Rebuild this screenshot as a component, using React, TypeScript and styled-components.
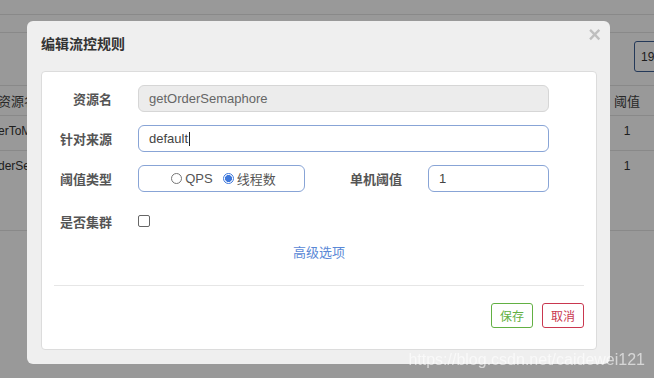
import React from "react";
import styled, { createGlobalStyle } from "styled-components";

const GlobalStyle = createGlobalStyle`
  html, body {
    margin: 0;
    padding: 0;
    width: 654px;
    height: 378px;
    overflow: hidden;
    background: #fff;
    font-family: "Liberation Sans", "Noto Sans CJK SC", sans-serif;
  }
`;

const Page = styled.div`
  width: 654px;
  height: 378px;
  background: #fff;
  color: #333;
  font-size: 12px;
`;

const Bar = styled.div<{ h: number }>`
  height: ${(p) => p.h}px;
  border-bottom: 1px solid #e4e4e4;
  box-sizing: border-box;
`;

const Toolbar = styled.div`
  height: 52px;
  display: flex;
  justify-content: flex-end;
  align-items: flex-start;
  padding-top: 8px;
  box-sizing: border-box;
`;

const SearchBox = styled.div`
  width: 60px;
  height: 31px;
  margin-right: -40px;
  border: 1px solid #3d5f95;
  border-radius: 3px;
  box-sizing: border-box;
  padding: 8px 6px;
  font-size: 12px;
`;

const TableRow = styled.div<{ h: number; head?: boolean }>`
  height: ${(p) => p.h}px;
  display: flex;
  justify-content: space-between;
  align-items: ${(p) => (p.head ? "center" : "flex-start")};
  padding: ${(p) => (p.head ? "0" : "8px")} 7px 0 0;
  border-top: 1px solid #e4e4e4;
  box-sizing: border-box;
  font-size: ${(p) => (p.head ? 13 : 12)}px;
  color: ${(p) => (p.head ? "#444" : "#333")};
`;

// left column sits mostly behind the dialog
const FirstCell = styled.div`
  white-space: nowrap;
  margin-left: -2px;
`;

const LastCell = styled.div`
  width: 40px;
  text-align: center;
`;

const Overlay = styled.div`
  position: fixed;
  inset: 0;
  background: rgba(0, 0, 0, 0.4);
`;

const Dialog = styled.div`
  position: absolute;
  left: 27px;
  top: 21px;
  width: 583px;
  height: 343px;
  box-sizing: border-box;
  background: #efefef;
  border-radius: 6px;
  padding: 14px 13px 14px 14px;
`;

const Title = styled.div`
  font-size: 14px;
  font-weight: bold;
  color: #333;
  line-height: 18px;
  margin-bottom: 18px;
`;

const Close = styled.span`
  position: absolute;
  top: 3px;
  right: 9px;
  font-size: 22px;
  font-weight: bold;
  line-height: 1;
  color: #000;
  opacity: 0.2;
`;

const Panel = styled.div`
  background: #fff;
  border: 1px solid #dcdcdc;
  border-radius: 4px;
  padding: 13px 0 21px;
  display: flex;
  flex-direction: column;
  gap: 13px;
`;

const Row = styled.div<{ offset?: number }>`
  display: flex;
  align-items: center;
  height: 27px;
  padding-right: 47px;
  margin-top: ${(p) => p.offset || 0}px;
`;

const Label = styled.label<{ w?: number }>`
  width: ${(p) => p.w || 70}px;
  flex-shrink: 0;
  text-align: right;
  font-size: 13px;
  font-weight: bold;
  color: #555;
  margin-right: 26px;
`;

const Field = styled.div<{ readonly?: boolean; w?: number }>`
  flex: ${(p) => (p.w ? "none" : "1")};
  width: ${(p) => (p.w ? `${p.w}px` : "auto")};
  height: 27px;
  box-sizing: border-box;
  border: 1px solid ${(p) => (p.readonly ? "#d6d6d6" : "#88a4d6")};
  background: ${(p) => (p.readonly ? "#ececec" : "#fff")};
  border-radius: 6px;
  padding: 0 10px;
  display: flex;
  align-items: center;
  font-size: 13px;
  color: ${(p) => (p.readonly ? "#666" : "#444")};
`;

const Caret = styled.span`
  display: inline-block;
  width: 1px;
  height: 14px;
  background: #222;
  margin-left: 1px;
`;

const RadioGroup = styled(Field)`
  justify-content: center;
  gap: 10px;
  padding: 0 0 0 4px;
`;

const RadioItem = styled.span`
  display: inline-flex;
  align-items: center;
  gap: 3px;
  font-size: 13px;
  color: #555;
`;

const RadioDot = styled.span<{ checked?: boolean }>`
  width: 11px;
  height: 11px;
  box-sizing: border-box;
  border-radius: 50%;
  border: 1px solid ${(p) => (p.checked ? "#3f78db" : "#767676")};
  background: ${(p) =>
    p.checked ? "radial-gradient(circle, #3f78db 0 3.2px, #fff 3.8px)" : "#fff"};
`;

const Checkbox = styled.span`
  width: 12px;
  height: 12px;
  box-sizing: border-box;
  border: 1px solid #666;
  border-radius: 2px;
  margin-top: -2px;
`;

const Advanced = styled.div`
  text-align: center;
  font-size: 13px;
  line-height: 18px;
  color: #5a88d6;
  margin-top: -4px;
`;

const Divider = styled.div`
  height: 1px;
  background: #e6e6e6;
  margin: 10px 12px 4px;
`;

const Footer = styled.div`
  display: flex;
  justify-content: flex-end;
  gap: 9px;
  padding-right: 12px;
`;

const Button = styled.button<{ tone: string }>`
  height: 25px;
  padding: 0 8px;
  font-family: inherit;
  font-size: 12px;
  background: #fff;
  color: ${(p) => p.tone};
  border: 1px solid ${(p) => p.tone};
  border-radius: 3px;
`;

const Watermark = styled.div`
  position: absolute;
  right: 9px;
  bottom: 9px;
  font-size: 16px;
  color: rgba(255, 255, 255, 0.6);
`;

export default function App() {
  return (
    <>
      <GlobalStyle />
      <Page>
        <Bar h={15} />
        <Bar h={18} />
        <Toolbar>
          <SearchBox>19</SearchBox>
        </Toolbar>
        <TableRow h={30} head>
          <FirstCell>资源名</FirstCell>
          <LastCell>阈值</LastCell>
        </TableRow>
        <TableRow h={35}>
          <FirstCell>erToMember</FirstCell>
          <LastCell>1</LastCell>
        </TableRow>
        <TableRow h={80}>
          <FirstCell>derSemaphore</FirstCell>
          <LastCell>1</LastCell>
        </TableRow>
        <TableRow h={40} />
      </Page>
      <Overlay>
        <Dialog>
          <Close>×</Close>
          <Title>编辑流控规则</Title>
          <Panel>
            <Row>
              <Label>资源名</Label>
              <Field readonly>getOrderSemaphore</Field>
            </Row>
            <Row>
              <Label>针对来源</Label>
              <Field>
                default
                <Caret />
              </Field>
            </Row>
            <Row>
              <Label>阈值类型</Label>
              <RadioGroup w={167}>
                <RadioItem>
                  <RadioDot />
                  QPS
                </RadioItem>
                <RadioItem>
                  <RadioDot checked />
                  线程数
                </RadioItem>
              </RadioGroup>
              <Label w={97}>单机阈值</Label>
              <Field>1</Field>
            </Row>
            <Row offset={3}>
              <Label>是否集群</Label>
              <Checkbox />
            </Row>
            <Advanced>高级选项</Advanced>
            <Divider />
            <Footer>
              <Button tone="#62b043">保存</Button>
              <Button tone="#c9374f">取消</Button>
            </Footer>
          </Panel>
        </Dialog>
        <Watermark>https://blog.csdn.net/caidewei121</Watermark>
      </Overlay>
    </>
  );
}
